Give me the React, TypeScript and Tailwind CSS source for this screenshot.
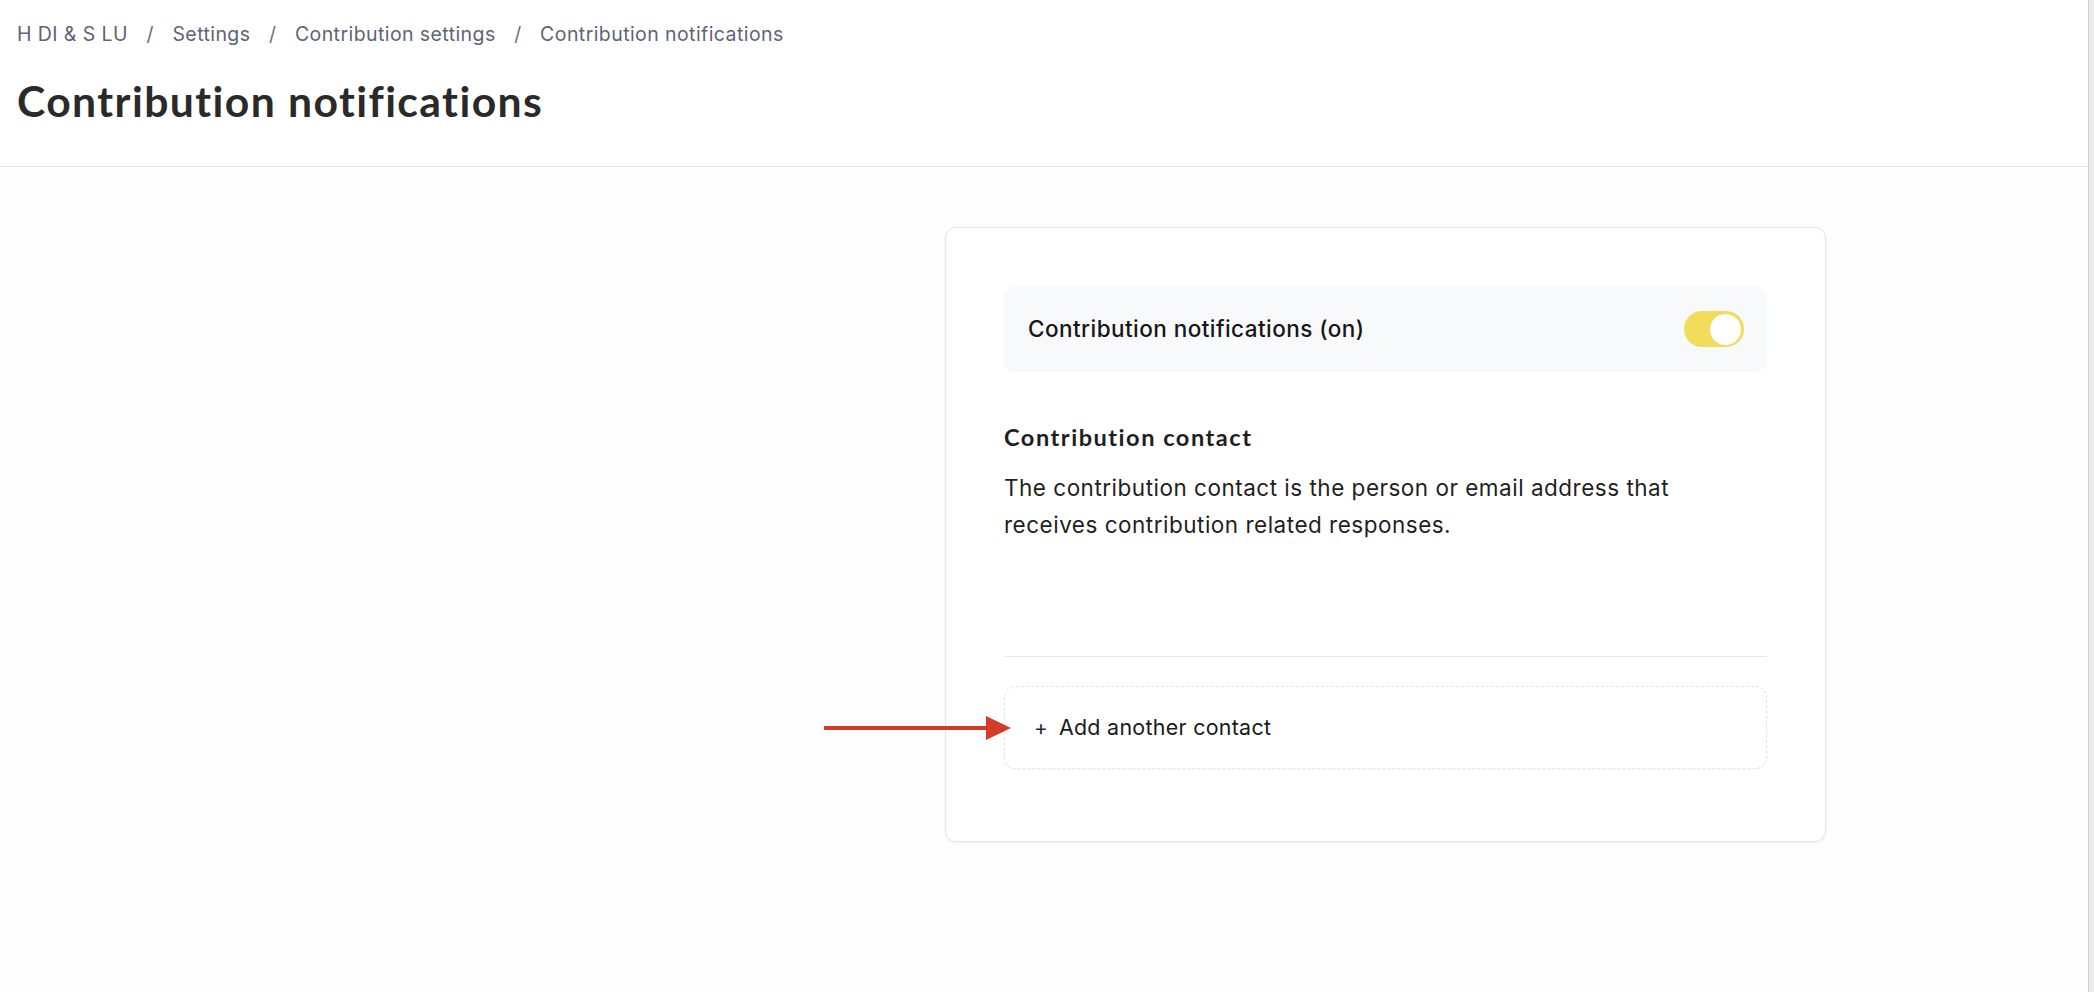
import React from 'react';

const crumbs = ['H DI & S LU', 'Settings', 'Contribution settings', 'Contribution notifications'];

function Toggle({ on }: { on: boolean }) {
    return (
        <div
            className={`flex h-[36px] w-[60px] items-center rounded-full px-[3px] ${
                on ? 'justify-end bg-[#f2dc5c]' : 'justify-start bg-[#d9dce1]'
            }`}
        >
            <div className="h-[31px] w-[31px] rounded-full bg-white" />
        </div>
    );
}

export default function App() {
    return (
        <div className="flex h-[992px] w-full overflow-hidden font-['Inter',sans-serif]">
            <main className="relative flex-1 bg-[#fdfdfd]">
                {/* Header */}
                <header className="h-[167px] border-b border-[#e7e7e9] bg-white pl-[17px] pt-[21px]">
                    <nav className="flex items-center gap-[18.5px] text-[19.5px] leading-[26px] tracking-[0.42px] text-[#5d6476]">
                        {crumbs.map((c, i) => (
                            <React.Fragment key={c}>
                                {i > 0 && <span className="text-[#6b7080]">/</span>}
                                <span>{c}</span>
                            </React.Fragment>
                        ))}
                    </nav>
                    <h1 className="mt-[26px] font-['Lato',sans-serif] text-[42.7px] font-bold leading-[56px] tracking-[1.4px] text-[#2a2a2a]">
                        Contribution notifications
                    </h1>
                </header>

                {/* Settings card */}
                <div className="pl-[945px] pt-[60px]">
                    <section className="w-[881px] rounded-[11px] border border-[#e6e7ea] bg-white px-[58px] pb-[72px] pt-[58px] shadow-[0_1px_3px_rgba(0,0,0,0.05)]">
                        <div className="flex h-[86px] items-center justify-between rounded-[12px] bg-[#f8f9fa] pl-[24px] pr-[23px]">
                            <span className="text-[22.5px] font-medium tracking-[0.45px] text-[#161616]">
                                Contribution notifications (on)
                            </span>
                            <Toggle on />
                        </div>

                        <h2 className="mt-[50px] font-['Lato',sans-serif] text-[23.6px] font-bold leading-[30px] tracking-[1.5px] text-[#1e1e1e]">
                            Contribution contact
                        </h2>
                        <p className="mt-[17px] w-[700px] text-[22.5px] leading-[37.4px] tracking-[0.5px] text-[#1f1f1f]">
                            The contribution contact is the person or email address that receives contribution related
                            responses.
                        </p>

                        <div className="mt-[112px] h-px bg-[#e5e7eb]" />

                        <button className="mt-[29px] flex h-[83px] w-full items-center gap-[11px] rounded-[12px] border border-dashed border-[#e3e4e7] bg-white pl-[29px] text-left shadow-[0_1px_2px_rgba(0,0,0,0.04)]">
                            <span className="text-[21px] leading-none text-[#2a2a2a]">+</span>
                            <span className="text-[21.4px] tracking-[0.3px] text-[#1a1a1a]">Add another contact</span>
                        </button>
                    </section>
                </div>

                {/* Annotation arrow */}
                <svg
                    className="absolute left-[824px] top-[716px]"
                    width="188"
                    height="24"
                    viewBox="0 0 188 24"
                >
                    <rect x="0" y="10" width="164" height="4" fill="#d43a24" />
                    <polygon points="162,0 187,12 162,24" fill="#d43a24" />
                </svg>
            </main>
            <div className="w-[6px] border-l border-[#d0d0d0] bg-[#ebebeb]" />
        </div>
    );
}
